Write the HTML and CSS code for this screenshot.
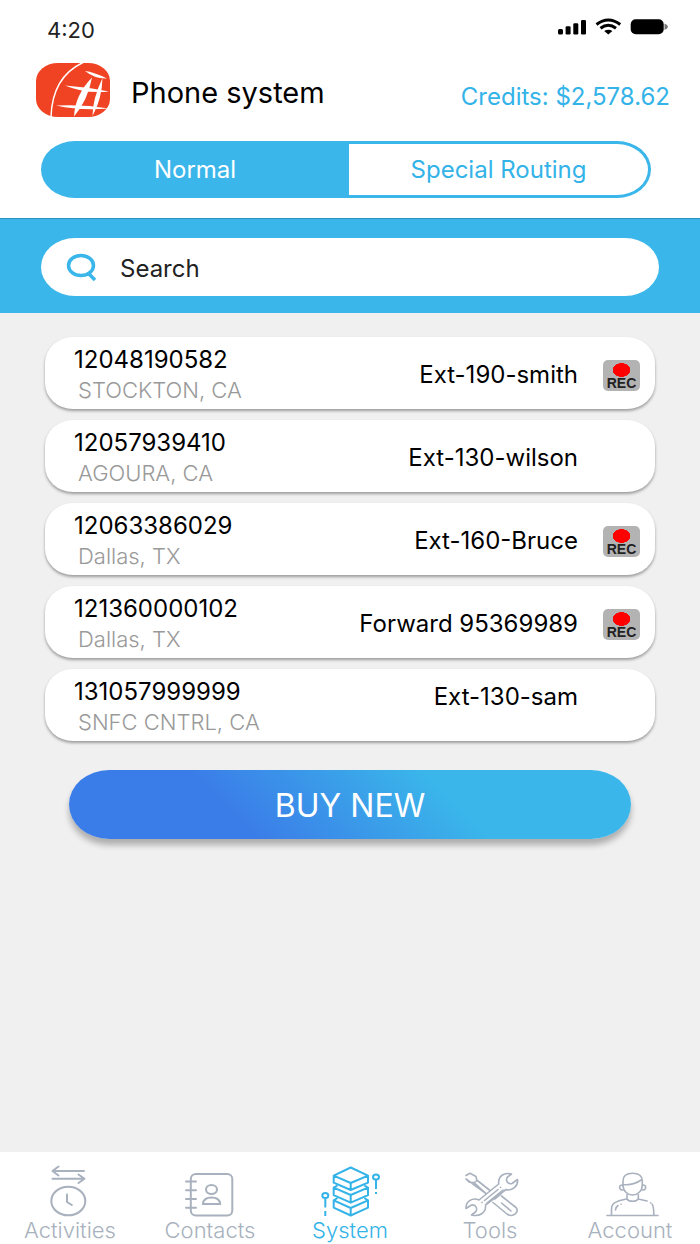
FILE: index.html
```
<!DOCTYPE html>
<html lang="en">
<head>
<meta charset="utf-8">
<meta name="viewport" content="width=device-width, initial-scale=1">
<title>Phone system</title>
<link rel="stylesheet" href="styles.css">
</head>
<body>
<div class="app">
  <div class="status">
    <span class="status-time">4:20</span>
    <svg class="status-icons" viewBox="0 0 112 20" aria-hidden="true">
      <rect x="1" y="12" width="5" height="5.5" rx="1.5"/>
      <rect x="8.6" y="9.3" width="5" height="8.2" rx="1.2"/>
      <rect x="16.3" y="6.3" width="5" height="11.2" rx="1.2"/>
      <rect x="24" y="3" width="5" height="14.5" rx="1.2"/>
      <path class="wave" d="M39.5 7.5Q51.3-1.5 63.2 7.5M43.5 11.2Q51.3 5.2 59 11.2"/>
      <path d="M47.2 14Q51.3 11.6 55.4 14L51.3 17.6Z"/>
      <rect x="73.7" y="2.3" width="33" height="15" rx="5"/>
      <path class="nub" d="M107.5 6.5Q111 8 111 9.8T107.5 13Z"/>
    </svg>
  </div>

  <header class="header">
    <svg class="logo" viewBox="0 0 76 56" role="img" aria-label="Logo">
      <rect class="logo-bg" x="1" y="1" width="74" height="54" rx="22" ry="18"/>
      <path class="logo-arc" d="M48 .5C32 8 17 22 16 55"/>
      <path class="logo-mark" d="M50 9Q59 10 72 16.500Q60 17 50 9ZM30 23.500Q52 25 74 29.500Q50 32 30 23.500ZM21 43.500Q48 42 74 46.500Q46 49 21 43.500ZM57 15.500Q53 38 39 54.500Q40 33 57 15.500ZM67.500 16Q67 37 57.500 54Q57.500 37 67.500 16Z"/>
    </svg>
    <h1 class="title">Phone system</h1>
    <span class="credits">Credits: $2,578.62</span>
  </header>

  <div class="tabs" role="tablist">
    <button class="tab tab-active" type="button" role="tab" aria-selected="true">Normal</button>
    <button class="tab" type="button" role="tab" aria-selected="false">Special Routing</button>
  </div>

  <div class="band">
    <label class="search">
      <svg class="search-icon" viewBox="0 0 32 30" aria-hidden="true"><ellipse cx="15" cy="13.500" rx="12.500" ry="10"/><path d="M21.500 20.500L29 28"/></svg>
      <input class="search-input" type="search" placeholder="Search" aria-label="Search">
    </label>
  </div>

  <main class="main">
    <ul class="list">
      <li class="card">
        <div class="info"><span class="number">12048190582</span><span class="place">STOCKTON, CA</span></div>
        <span class="route">Ext-190-smith</span>
        <span class="slot"><span class="rec">REC</span></span>
      </li>
      <li class="card">
        <div class="info"><span class="number">12057939410</span><span class="place">AGOURA, CA</span></div>
        <span class="route">Ext-130-wilson</span>
        <span class="slot"></span>
      </li>
      <li class="card">
        <div class="info"><span class="number">12063386029</span><span class="place">Dallas, TX</span></div>
        <span class="route">Ext-160-Bruce</span>
        <span class="slot"><span class="rec">REC</span></span>
      </li>
      <li class="card">
        <div class="info"><span class="number">121360000102</span><span class="place">Dallas, TX</span></div>
        <span class="route">Forward 95369989</span>
        <span class="slot"><span class="rec">REC</span></span>
      </li>
      <li class="card card-top">
        <div class="info"><span class="number">131057999999</span><span class="place">SNFC CNTRL, CA</span></div>
        <span class="route">Ext-130-sam</span>
        <span class="slot"></span>
      </li>
    </ul>
    <button class="buy" type="button">BUY NEW</button>
  </main>

  <nav class="nav">
    <a class="nav-item" href="#activities">
      <svg class="nav-icon" viewBox="0 0 60 54" aria-hidden="true">
        <path d="M44 7H13M18.500 2.500L12.500 7L18.500 11.500M12.500 14.700H44M38.500 10.500L44.500 14.700L38.500 19"/>
        <ellipse cx="28.300" cy="37" rx="17" ry="14.300"/>
        <path d="M27 30.500V38L31.800 41"/>
      </svg>
      <span>Activities</span>
    </a>
    <a class="nav-item" href="#contacts">
      <svg class="nav-icon" viewBox="0 0 60 54" aria-hidden="true">
        <rect x="10.800" y="10" width="41.500" height="41.500" rx="5"/>
        <path d="M6 17.500H16M6 26.300H16M6 35H16M6 43.700H16"/>
        <ellipse cx="31.500" cy="25.500" rx="5.500" ry="4.400"/>
        <path d="M22.800 40Q23.500 33.500 31.500 33.500T40.300 40Z"/>
      </svg>
      <span>Contacts</span>
    </a>
    <a class="nav-item nav-current" href="#system" aria-current="page">
      <svg class="nav-icon" viewBox="0 0 60 54" aria-hidden="true">
        <path d="M30.700 3.500L48 11.700L30.700 19L13.700 11.700ZM13.700 11.700V18.700L30.700 26L48 18.700V11.700M30.700 19V26"/>
        <path d="M17.500 21.500L13.700 23.700V31.200L30.700 38.700L48 31.200V23.700L44.300 21.500M13.700 23.700L30.700 31L48 23.700M30.700 31V38.700"/>
        <path d="M17.500 34L13.700 36.300V43.700L30.700 51.500L48 43.700V36.300L44.300 34M13.700 36.300L30.700 44L48 36.300M30.700 44V51.500"/>
        <ellipse cx="56" cy="13" rx="3" ry="2.500"/><path d="M56 15.500V25M56 28V30"/>
        <ellipse cx="5.300" cy="31.500" rx="3" ry="2.500"/><path d="M5.300 34V43.500M5.300 47V52"/>
      </svg>
      <span>System</span>
    </a>
    <a class="nav-item" href="#tools">
      <svg class="nav-icon nav-fine" viewBox="0 0 60 54" aria-hidden="true">
        <path d="M6 11.500L10 9.300L16 12.500L16.700 16L30 26.500M26 29.500L14 18.500L9.500 18.300L6 15ZM17 16.500L14.500 18.500"/>
        <path d="M51.500 10C44 8 38 12 38.700 20L19 36C12 33 5.500 38 6 44.500L11.500 41C16 40 18 45 15.500 48L11.500 51C19 53 26.500 49 25.500 41L46 25.500C52 27.500 58.500 22 57.500 15.500L52 19.500C48 20.500 45 16.500 47.500 13Z"/>
        <path d="M24.500 36.500L38 25.500M40.500 23.400L40.600 23.300M22 38.500L22.100 38.400M27 39L43 26"/>
        <path d="M33 38.500L47 50C53 54 60 48 56 43.500L41.500 32M35 35L41 30M41.500 39L51 47"/>
      </svg>
      <span>Tools</span>
    </a>
    <a class="nav-item" href="#account">
      <svg class="nav-icon nav-fine" viewBox="0 0 60 54" aria-hidden="true">
        <path d="M23 21V17C23 11 27 9.300 32.500 9.300S42.300 11 42.300 17V21C42.300 27 37.500 31 32.500 31S23 27 23 21ZM23 20.500C31 21.500 37 19 42 15.500"/>
        <path d="M22.800 21C18.500 20.500 18.500 26.500 23 26M42.500 21C46.800 20.500 46.800 26.500 42.300 26"/>
        <path d="M27 30.500V35C29 38 36 38 38.300 35V30.500M27 35C18 37 11.500 38 11.500 45V51M38.300 35L47 37M50.500 38.700L50.600 38.800M52 40C53.500 41.500 53.800 43 53.800 51M15.500 46C15.500 43.500 16.500 42.500 18 41.500M21 40.300L21.100 40.300M7 51.500H58"/>
      </svg>
      <span>Account</span>
    </a>
  </nav>
</div>
</body>
</html>
```
FILE: styles.css
```
* {
  box-sizing: border-box;
}

body {
  margin: 0;
  background: #f0f0f0;
  color: #000;
  font-family: Inter, "Liberation Sans", sans-serif;
  font-size: 24px;
}

button,
input {
  font: inherit;
}

.app {
  display: flex;
  flex-direction: column;
  min-height: 100vh;
}

.status {
  display: flex;
  justify-content: space-between;
  align-items: center;
  padding: 16px 31px 0 47px;
  background: #fff;
}

.status-time {
  color: #222;
  font-size: 22px;
  line-height: 28px;
}

.status-icons {
  width: 112px;
  height: 20px;
  margin-bottom: 6px;
}

.wave {
  fill: none;
  stroke: #000;
  stroke-width: 3;
}

.nub {
  fill: #777;
}

.header {
  display: flex;
  align-items: center;
  padding: 18px 30px 0 35px;
  background: #fff;
}

.logo {
  width: 76px;
  height: 56px;
}

.logo-bg {
  fill: #f04323;
}

.logo-arc {
  fill: none;
  stroke: #fff;
  stroke-width: 1.5;
}

.logo-mark {
  fill: #fff;
}

.title {
  margin: 6px 0 0 20px;
  font-size: 29px;
  font-weight: 400;
  line-height: 36px;
}

.credits {
  margin: 14px 0 0 auto;
  color: #33b3e8;
  line-height: 32px;
}

.tabs {
  display: grid;
  grid-template-columns: 102fr 100fr;
  padding: 23px 49px 20px 41px;
  background: #fff;
}

.tab {
  height: 57px;
  padding: 0;
  border: 3px solid #3ab6ea;
  border-left: 0;
  border-radius: 0 34px 34px 0 / 0 50% 50% 0;
  background: #fff;
  color: #33b3e8;
}

.tab-active {
  border: 0;
  border-radius: 34px 0 0 34px / 50% 0 0 50%;
  background: #3ab6ea;
  color: #fff;
}

.band {
  padding: 19px 41px 17px;
  border-top: 1px solid #2e92bd;
  background: #3ab6ea;
}

.search {
  display: flex;
  align-items: center;
  height: 58px;
  padding: 0 26px 0 25px;
  border-radius: 34px / 50%;
  background: #fff;
}

.search-icon {
  width: 32px;
  height: 30px;
  fill: none;
  stroke: #3ab6ea;
  stroke-width: 3.5;
}

.search-input {
  flex: 1;
  min-width: 0;
  margin-left: 22px;
  padding: 2px 0 0;
  border: 0;
  outline: 0;
  background: none;
}

.search-input::placeholder {
  color: #222;
  opacity: 1;
}

.main {
  flex: 1;
  padding: 24px 45px;
}

.list {
  display: grid;
  gap: 11px;
  margin: 0;
  padding: 0;
  list-style: none;
}

.card {
  display: flex;
  align-items: center;
  min-height: 72px;
  padding: 8px 15px 4px 29px;
  border-radius: 28px / 26px;
  background: #fff;
  box-shadow: 0 2px 3px rgba(0, 0, 0, 0.35);
}

.info {
  flex: 1;
}

.number,
.place {
  display: block;
  line-height: 30px;
}

.place {
  padding-left: 4px;
  color: #999;
  font-size: 22px;
  font-weight: 300;
}

.route {
  line-height: 40px;
}

.card-top .route {
  align-self: flex-start;
}

.slot {
  width: 37px;
  margin-left: 25px;
}

.rec {
  display: block;
  padding-top: 16px;
  border-radius: 5px;
  background: radial-gradient(ellipse 9px 7px at 50% 10px, #f00 95%, #b3b3b3 100%);
  color: #222;
  font: bold 14px/15px "Liberation Sans", sans-serif;
  text-align: center;
}

.buy {
  display: block;
  width: calc(100% - 48px);
  height: 69px;
  margin: 29px auto 0;
  padding: 2px 0 0;
  border: 0;
  border-radius: 40px / 50%;
  background: linear-gradient(45deg, #3b7de8 30%, #3ab6ea 67%);
  box-shadow: 0 6px 6px rgba(0, 0, 0, 0.28);
  color: #fff;
  font-size: 32px;
}

.nav {
  display: grid;
  grid-template-columns: repeat(5, 1fr);
  padding: 12px 0 2px;
  background: #fff;
}

.nav-item {
  display: flex;
  flex-direction: column;
  align-items: center;
  color: #a8b1bd;
  font-size: 22px;
  font-weight: 300;
  line-height: 24px;
  text-decoration: none;
}

.nav-icon {
  width: 60px;
  height: 54px;
  fill: none;
  stroke: currentColor;
  stroke-width: 2;
  stroke-linecap: round;
  stroke-linejoin: round;
}

.nav-fine {
  stroke-width: 1.6;
}

.nav-current {
  color: #33b3e8;
}

.nav-current .nav-icon {
  stroke-linecap: butt;
}
```
